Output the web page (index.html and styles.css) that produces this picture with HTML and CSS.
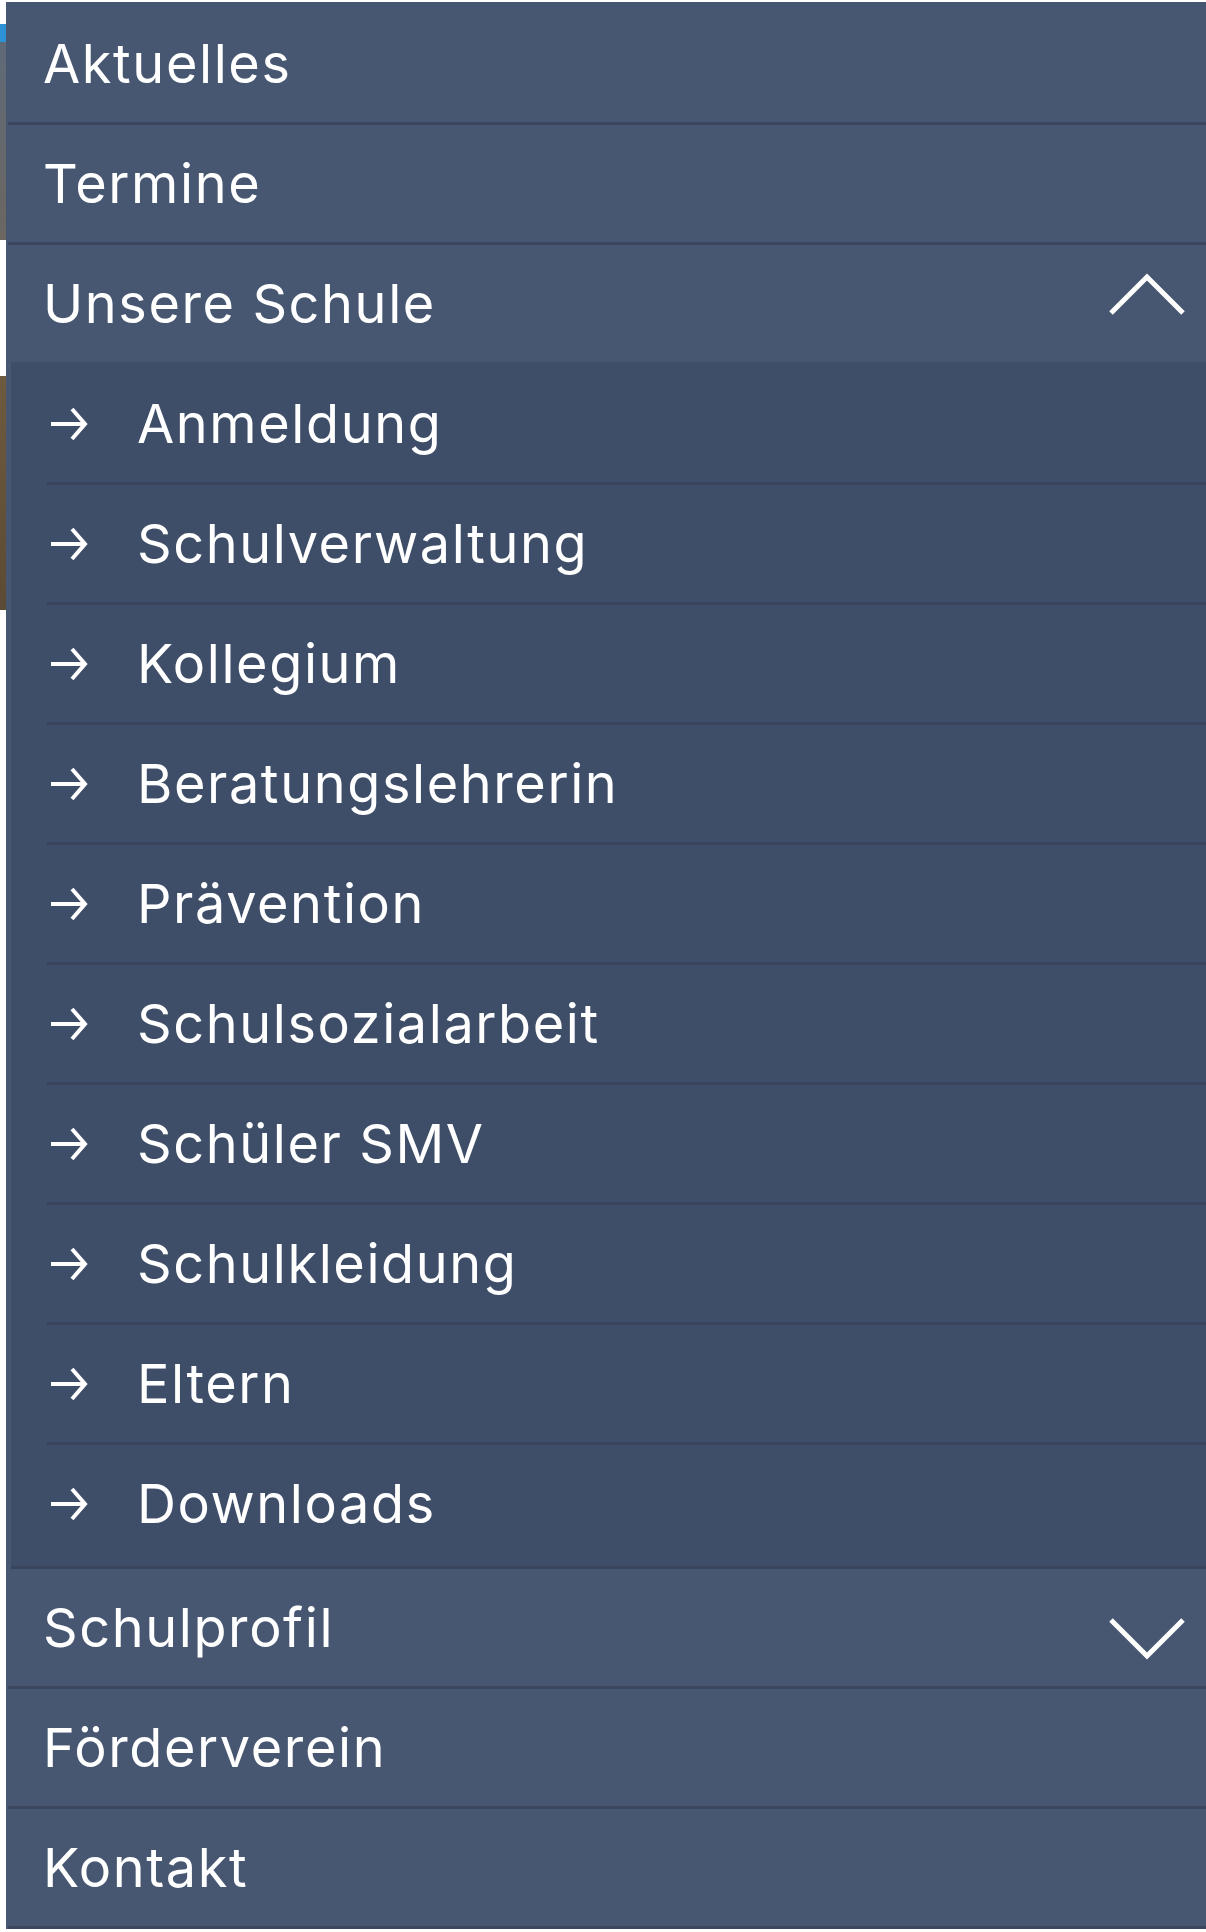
FILE: index.html
```html
<!DOCTYPE html>
<html lang="de">
<head>
    <meta charset="UTF-8">
    <meta name="viewport" content="width=device-width, initial-scale=1.0">
    <title>Menü</title>
    <link rel="stylesheet" href="styles.css">
</head>
<body>
    <nav class="menu">
        <ul class="nav">
            <li class="item"><a href="#">Aktuelles</a></li>
            <li class="item"><a href="#">Termine</a></li>
            <li class="item open">
                <a href="#">Unsere Schule
                    <svg class="chevron up" viewBox="0 0 76 42"><polyline points="2,40 38,4 74,40" /></svg>
                </a>
                <ul class="sub">
                    <li><a href="#"><svg class="arrow" viewBox="0 0 38 36"><path d="M1 18 H35 M22 3 L35 18 L22 33" /></svg>Anmeldung</a></li>
                    <li><a href="#"><svg class="arrow" viewBox="0 0 38 36"><path d="M1 18 H35 M22 3 L35 18 L22 33" /></svg>Schulverwaltung</a></li>
                    <li><a href="#"><svg class="arrow" viewBox="0 0 38 36"><path d="M1 18 H35 M22 3 L35 18 L22 33" /></svg>Kollegium</a></li>
                    <li><a href="#"><svg class="arrow" viewBox="0 0 38 36"><path d="M1 18 H35 M22 3 L35 18 L22 33" /></svg>Beratungslehrerin</a></li>
                    <li><a href="#"><svg class="arrow" viewBox="0 0 38 36"><path d="M1 18 H35 M22 3 L35 18 L22 33" /></svg>Prävention</a></li>
                    <li><a href="#"><svg class="arrow" viewBox="0 0 38 36"><path d="M1 18 H35 M22 3 L35 18 L22 33" /></svg>Schulsozialarbeit</a></li>
                    <li><a href="#"><svg class="arrow" viewBox="0 0 38 36"><path d="M1 18 H35 M22 3 L35 18 L22 33" /></svg>Schüler SMV</a></li>
                    <li><a href="#"><svg class="arrow" viewBox="0 0 38 36"><path d="M1 18 H35 M22 3 L35 18 L22 33" /></svg>Schulkleidung</a></li>
                    <li><a href="#"><svg class="arrow" viewBox="0 0 38 36"><path d="M1 18 H35 M22 3 L35 18 L22 33" /></svg>Eltern</a></li>
                    <li><a href="#"><svg class="arrow" viewBox="0 0 38 36"><path d="M1 18 H35 M22 3 L35 18 L22 33" /></svg>Downloads</a></li>
                </ul>
            </li>
            <li class="item">
                <a href="#">Schulprofil
                    <svg class="chevron down" viewBox="0 0 76 42"><polyline points="2,2 38,38 74,2" /></svg>
                </a>
            </li>
            <li class="item"><a href="#">Förderverein</a></li>
            <li class="item"><a href="#">Kontakt</a></li>
        </ul>
    </nav>
</body>
</html>
```

FILE: styles.css
```css
body {
    margin: 0;
    background-color: #fff;
    background-image: linear-gradient(to bottom,
        #fff 0px, #fff 24px,
        #2b93d6 24px, #2b93d6 42px,
        #5f6a78 42px, #6b6660 240px,
        #fff 240px, #fff 376px,
        #6e5a3e 376px, #5b4a35 610px,
        #fff 610px);
    background-size: 6px 100%;
    background-repeat: no-repeat;
    font-family: Inter, "Open Sans", sans-serif;
}
.menu {
    margin: 2px 0 0 6px;
    padding-top: 3px;
    background: #475771;
}
.nav, .sub {
    list-style: none;
    margin: 0;
    padding: 0;
}
.item > a {
    display: flex;
    align-items: center;
    justify-content: space-between;
    height: 117px;
    padding: 0 21px 0 35px;
    margin-left: 2px;
    border-bottom: 3px solid #3a475f;
    color: #fff;
    text-decoration: none;
    font-size: 54px;
    letter-spacing: 1.6px;
}
.item.open > a {
    border-bottom: none;
}
.sub {
    margin-left: 5px;
    background: #3e4d68;
    padding: 3px 0 4px 0;
    border-bottom: 3px solid #37445c;
}
.sub li {
    margin-left: 36px;
    border-bottom: 3px solid #37445b;
}
.sub li:last-child {
    border-bottom: none;
}
.sub a {
    display: flex;
    align-items: center;
    height: 117px;
    padding-left: 3px;
    color: #fff;
    text-decoration: none;
    font-size: 54px;
    letter-spacing: 1.6px;
}
.arrow {
    width: 38px;
    height: 36px;
    margin-right: 49px;
    fill: none;
    stroke: #fff;
    stroke-width: 4;
}
.chevron {
    width: 76px;
    height: 42px;
    fill: none;
    stroke: #fff;
    stroke-width: 5;
}
.chevron.up {
    margin-bottom: 20px;
}
.chevron.down {
    margin-top: 22px;
}
```
